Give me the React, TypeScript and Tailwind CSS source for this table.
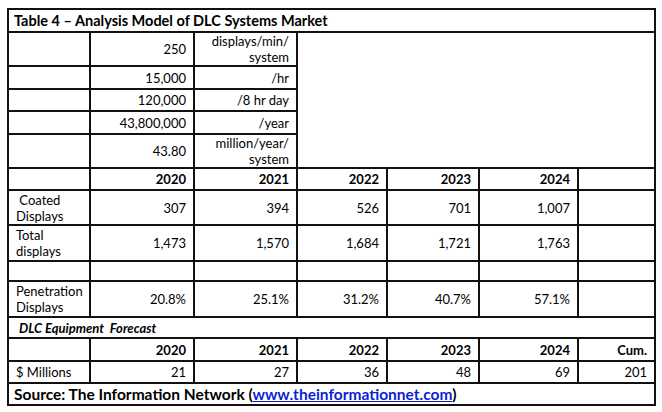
import React from "react";

const years = ["2020", "2021", "2022", "2023", "2024"];

const widths = [82, 104, 103, 90, 92, 99, 77];

const dataRows: { label: React.ReactNode; h: number; vals: string[] }[] = [
  { label: "\u00a0Coated Displays", h: 35, vals: ["307", "394", "526", "701", "1,007", ""] },
  { label: "Total displays", h: 36, vals: ["1,473", "1,570", "1,684", "1,721", "1,763", ""] },
  { label: "", h: 20, vals: ["", "", "", "", "", ""] },
  { label: "Penetration Displays", h: 36, vals: ["20.8%", "25.1%", "31.2%", "40.7%", "57.1%", ""] },
];

const topRows: { h: number; num: string; unit: React.ReactNode }[] = [
  { h: 34, num: "250", unit: <>displays/min/<br />system</> },
  { h: 23, num: "15,000", unit: "/hr" },
  { h: 22, num: "120,000", unit: "/8 hr day" },
  { h: 23, num: "43,800,000", unit: "/year" },
  { h: 34, num: "43.80", unit: <>million/year/<br />system</> },
];

const td = "border-2 border-[#111] px-[7px] py-0 leading-4 align-middle";

function Num({ children, bold }: { children?: React.ReactNode; bold?: boolean }) {
  return <td className={`${td} text-right ${bold ? "font-bold" : ""}`}>{children}</td>;
}

export default function App() {
  return (
    <div className="bg-white w-[662px] h-[412px] pl-[7px] pt-[8px] text-black text-[13px]" style={{ fontFamily: "Lato, 'Liberation Sans', sans-serif" }}>
      <table className="table-fixed border-collapse border-2 border-[#111]" style={{ width: 647 }}>
        <colgroup>
          {widths.map((w, i) => (
            <col key={i} style={{ width: w }} />
          ))}
        </colgroup>
        <tbody>
          <tr className="h-[23px]">
            <td colSpan={7} className={`${td} pl-[5px] text-[14.5px] font-bold`}>
              Table 4 – Analysis Model of DLC Systems Market
            </td>
          </tr>
          {topRows.map((r, i) => (
            <tr key={i} style={{ height: r.h }}>
              <td className={td}></td>
              <Num>{r.num}</Num>
              <Num>{r.unit}</Num>
              {i === 0 && <td rowSpan={5} colSpan={4} className="border-r-2 border-[#111]"></td>}
            </tr>
          ))}
          <tr className="h-[22px]">
            <td className={td}></td>
            {years.map((y) => (
              <Num key={y} bold>{y}</Num>
            ))}
            <td className={td}></td>
          </tr>
          {dataRows.map((r, i) => (
            <tr key={i} style={{ height: r.h }}>
              <td className={`${td} text-left whitespace-pre-wrap`}>{r.label}</td>
              {r.vals.map((v, j) => (
                <Num key={j}>{v}</Num>
              ))}
            </tr>
          ))}
          <tr className="h-[21px]">
            <td colSpan={7} className={`${td} pl-[10px] font-bold italic whitespace-pre`}>
              {"DLC Equipment  Forecast"}
            </td>
          </tr>
          <tr className="h-[23px]">
            <td className={td}></td>
            {years.map((y) => (
              <Num key={y} bold>{y}</Num>
            ))}
            <Num bold>Cum.</Num>
          </tr>
          <tr className="h-[22px]">
            <td className={`${td} text-left`}>$ Millions</td>
            {["21", "27", "36", "48", "69", "201"].map((v) => (
              <Num key={v}>{v}</Num>
            ))}
          </tr>
          <tr className="h-[22px]">
            <td colSpan={7} className={`${td} pl-[5px] text-[15.5px] font-bold`}>
              Source: The Information Network (
              <a className="text-[#0b1fd6] underline">www.theinformationnet.com</a>)
            </td>
          </tr>
        </tbody>
      </table>
    </div>
  );
}
